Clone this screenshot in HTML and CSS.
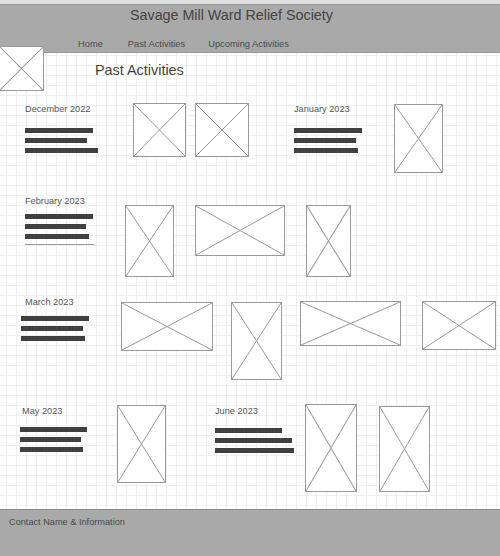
FILE: index.html
```html
<!doctype html>
<html lang="en">
<head>
    <meta charset="utf-8">
    <title>Savage Mill Ward Relief Society - Past Activities</title>
    <link rel="stylesheet" href="styles.css">
</head>
<body>
    <div class="topbar"></div>
    <header class="masthead">
        <h1 class="site-title">Savage Mill Ward Relief Society</h1>
        <nav class="nav">
            <a href="#">Home</a>
            <a href="#">Past Activities</a>
            <a href="#">Upcoming Activities</a>
        </nav>
    </header>

    <!-- logo placeholder sits over the header edge -->
    <div class="ph logo"><svg viewBox="0 0 10 10" preserveAspectRatio="none"><path d="M0 0L10 10M10 0L0 10"/></svg></div>

    <main class="board">
        <h2 class="page-title">Past Activities</h2>

        <section class="row row-1">
            <div class="entry dec">
                <p class="month">December 2022</p>
                <div class="lines"><span class="w68"></span><span class="w62"></span><span class="w73"></span></div>
            </div>
            <div class="ph dec-a"><svg viewBox="0 0 10 10" preserveAspectRatio="none"><path d="M0 0L10 10M10 0L0 10"/></svg></div>
            <div class="ph dec-b"><svg viewBox="0 0 10 10" preserveAspectRatio="none"><path d="M0 0L10 10M10 0L0 10"/></svg></div>
            <div class="entry jan">
                <p class="month">January 2023</p>
                <div class="lines"><span class="w68"></span><span class="w62"></span><span class="w64"></span></div>
            </div>
            <div class="ph jan-a"><svg viewBox="0 0 10 10" preserveAspectRatio="none"><path d="M0 0L10 10M10 0L0 10"/></svg></div>
        </section>

        <section class="row row-2">
            <div class="entry feb">
                <p class="month">February 2023</p>
                <div class="lines"><span class="w68"></span><span class="w61"></span><span class="w64"></span></div>
                <hr class="rule">
            </div>
            <div class="ph feb-a"><svg viewBox="0 0 10 10" preserveAspectRatio="none"><path d="M0 0L10 10M10 0L0 10"/></svg></div>
            <div class="ph feb-b"><svg viewBox="0 0 10 10" preserveAspectRatio="none"><path d="M0 0L10 10M10 0L0 10"/></svg></div>
            <div class="ph feb-c"><svg viewBox="0 0 10 10" preserveAspectRatio="none"><path d="M0 0L10 10M10 0L0 10"/></svg></div>
        </section>

        <section class="row row-3">
            <div class="entry mar">
                <p class="month">March 2023</p>
                <div class="lines"><span class="w68"></span><span class="w62"></span><span class="w64"></span></div>
            </div>
            <div class="ph mar-a"><svg viewBox="0 0 10 10" preserveAspectRatio="none"><path d="M0 0L10 10M10 0L0 10"/></svg></div>
            <div class="ph mar-b"><svg viewBox="0 0 10 10" preserveAspectRatio="none"><path d="M0 0L10 10M10 0L0 10"/></svg></div>
            <div class="ph mar-c"><svg viewBox="0 0 10 10" preserveAspectRatio="none"><path d="M0 0L10 10M10 0L0 10"/></svg></div>
            <div class="ph mar-d"><svg viewBox="0 0 10 10" preserveAspectRatio="none"><path d="M0 0L10 10M10 0L0 10"/></svg></div>
        </section>

        <section class="row row-4">
            <div class="entry may">
                <p class="month">May 2023</p>
                <div class="lines"><span class="w67"></span><span class="w61"></span><span class="w63"></span></div>
            </div>
            <div class="ph may-a"><svg viewBox="0 0 10 10" preserveAspectRatio="none"><path d="M0 0L10 10M10 0L0 10"/></svg></div>
            <div class="entry jun">
                <p class="month">June 2023</p>
                <div class="lines"><span class="w67"></span><span class="w77"></span><span class="w79"></span></div>
            </div>
            <div class="ph jun-a"><svg viewBox="0 0 10 10" preserveAspectRatio="none"><path d="M0 0L10 10M10 0L0 10"/></svg></div>
            <div class="ph jun-b"><svg viewBox="0 0 10 10" preserveAspectRatio="none"><path d="M0 0L10 10M10 0L0 10"/></svg></div>
        </section>
    </main>

    <footer class="foot">
        <p>Contact Name &amp; Information</p>
    </footer>
</body>
</html>
```

FILE: styles.css
```css
* {
    padding: 0;
    margin: 0;
    box-sizing: border-box;
}
html, body {
    height: 100%;
}
body {
    display: flex;
    flex-direction: column;
    overflow: hidden;
    font-family: "Liberation Sans", Arial, sans-serif;
    color: #4a4a4a;
    background: #fff;
}
.topbar {
    flex: none;
    height: 5px;
    background: #dedede;
    border-bottom: 1px solid #999999;
}
.masthead {
    flex: none;
    height: 48px;
    padding-top: 1px;
    background: #a9a9a9;
    border-bottom: 1px solid #999999;
}
.site-title {
    font-size: 14.3px;
    line-height: 18px;
    font-weight: normal;
    color: #444444;
    padding-left: 130px;
}
.nav {
    display: flex;
    gap: 23px;
    margin-top: 14px;
    padding-left: 78px;
}
.nav a {
    font-size: 9.3px;
    line-height: 12px;
    color: #4a4a4a;
    text-decoration: none;
}
.nav a:first-child {
    margin-right: 2px;
}

/* image placeholders */
.ph {
    flex: none;
    background: #fff;
    border: 1px solid #9a9a9a;
}
.ph svg {
    display: block;
    width: 100%;
    height: 100%;
}
.ph path {
    fill: none;
    stroke: #9a9a9a;
    stroke-width: 1;
    vector-effect: non-scaling-stroke;
}
.logo {
    position: absolute;
    left: -1px;
    top: 46px;
    width: 45px;
    height: 45px;
}

.board {
    flex: 1;
    overflow: hidden;
    background-color: #fff;
    background-image:
        linear-gradient(#efefef 1px, transparent 1px),
        linear-gradient(90deg, #efefef 1px, transparent 1px);
    background-size: 10px 10px;
    background-position: 6px 2px;
}
.page-title {
    font-size: 14.4px;
    line-height: 18px;
    font-weight: normal;
    color: #444444;
    margin-top: 8px;
    padding-left: 95px;
}
.row {
    display: flex;
    align-items: flex-start;
}
.row-1 { margin-top: 24px; }
.row-2 { margin-top: 22px; }
.row-3 { margin-top: 19px; }
.row-4 { margin-top: 24px; }

/* month entries */
.entry {
    flex: none;
    width: 75px;
}
.month {
    font-size: 9.2px;
    line-height: 12px;
    color: #555555;
    white-space: nowrap;
}
.lines span {
    display: block;
    height: 5px;
    margin-top: 5px;
    background: #404040;
}
.lines span:first-child {
    margin-top: 0;
}
.w61 { width: 61px; }
.w62 { width: 62px; }
.w63 { width: 63px; }
.w64 { width: 64px; }
.w67 { width: 67px; }
.w68 { width: 68px; }
.w73 { width: 73px; }
.w77 { width: 77px; }
.w79 { width: 79px; }
.rule {
    width: 69px;
    height: 0;
    border: 0;
    border-top: 1px solid #999999;
    margin-top: 5px;
}

.dec { margin-left: 25px; }
.dec .lines { margin-top: 13px; }
.jan { margin-left: 45px; }
.jan .lines { margin-top: 13px; }
.feb { margin-left: 25px; }
.feb .lines { margin-top: 7px; }
.mar { margin-left: 21px; }
.mar .month { padding-left: 4px; }
.mar .lines { margin-top: 8px; }
.may { margin-left: 20px; margin-top: 1px; }
.may .month { padding-left: 2px; }
.may .lines { margin-top: 10px; }
.jun { margin-left: 49px; margin-top: 1px; width: 80px; }
.jun .lines { margin-top: 11px; }

.dec-a { width: 53px; height: 54px; margin-left: 33px; }
.dec-b { width: 54px; height: 54px; margin-left: 9px; }
.jan-a { width: 49px; height: 69px; margin-left: 25px; margin-top: 1px; }

.feb-a { width: 49px; height: 72px; margin-left: 25px; margin-top: 10px; }
.feb-b { width: 90px; height: 51px; margin-left: 21px; margin-top: 10px; }
.feb-c { width: 45px; height: 72px; margin-left: 21px; margin-top: 10px; }

.mar-a { width: 92px; height: 49px; margin-left: 25px; margin-top: 6px; }
.mar-b { width: 51px; height: 78px; margin-left: 18px; margin-top: 6px; }
.mar-c { width: 101px; height: 45px; margin-left: 18px; margin-top: 5px; }
.mar-d { width: 74px; height: 49px; margin-left: 21px; margin-top: 5px; }

.may-a { width: 49px; height: 78px; margin-left: 22px; margin-top: 1px; }
.jun-a { width: 52px; height: 88px; margin-left: 10px; }
.jun-b { width: 51px; height: 86px; margin-left: 22px; margin-top: 2px; }

.foot {
    flex: none;
    height: 47px;
    padding: 6px 9px 0;
    background: #a9a9a9;
    border-top: 1px solid #8c8c8c;
}
.foot p {
    font-size: 9.2px;
    line-height: 12px;
    color: #4a4a4a;
}
```
